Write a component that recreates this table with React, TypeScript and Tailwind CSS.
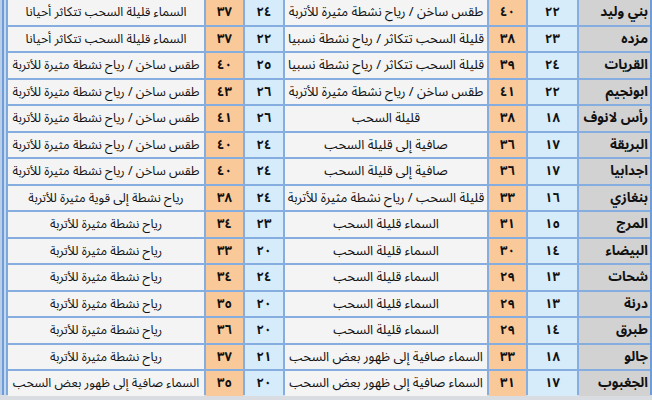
const rows: string[][] = [
  ["بني وليد", "٢٢", "٤٠", "طقس ساخن / رياح نشطة مثيرة للأتربة", "٢٤", "٣٧", "السماء قليلة السحب تتكاثر أحيانا"],
  ["مزده", "٢٣", "٣٨", "قليلة السحب تتكاثر / رياح نشطة نسبيا", "٢٢", "٣٧", "السماء قليلة السحب تتكاثر أحيانا"],
  ["القريات", "٢٤", "٣٩", "قليلة السحب تتكاثر / رياح نشطة نسبيا", "٢٥", "٤٠", "طقس ساخن / رياح نشطة مثيرة للأتربة"],
  ["ابونجيم", "٢٢", "٤١", "طقس ساخن / رياح نشطة مثيرة للأتربة", "٢٦", "٤٣", "طقس ساخن / رياح نشطة مثيرة للأتربة"],
  ["رأس لانوف", "١٨", "٣٨", "قليلة السحب", "٢٦", "٤١", "طقس ساخن / رياح نشطة مثيرة للأتربة"],
  ["البريقة", "١٧", "٣٦", "صافية إلى قليلة السحب", "٢٤", "٤٠", "طقس ساخن / رياح نشطة مثيرة للأتربة"],
  ["اجدابيا", "١٧", "٣٦", "صافية إلى قليلة السحب", "٢٤", "٤٠", "طقس ساخن / رياح نشطة مثيرة للأتربة"],
  ["بنغازي", "١٦", "٣٣", "قليلة السحب / رياح نشطة مثيرة للأتربة", "٢٤", "٣٨", "رياح نشطة إلى قوية مثيرة للأتربة"],
  ["المرج", "١٥", "٣١", "السماء قليلة السحب", "٢٣", "٣٤", "رياح نشطة مثيرة للأتربة"],
  ["البيضاء", "١٤", "٣٠", "السماء قليلة السحب", "٢٠", "٣٣", "رياح نشطة مثيرة للأتربة"],
  ["شحات", "١٣", "٢٩", "السماء قليلة السحب", "٢٤", "٣٤", "رياح نشطة مثيرة للأتربة"],
  ["درنة", "١٣", "٢٩", "السماء قليلة السحب", "٢٠", "٣٥", "رياح نشطة مثيرة للأتربة"],
  ["طبرق", "١٤", "٢٩", "السماء قليلة السحب", "٢٠", "٣٦", "رياح نشطة مثيرة للأتربة"],
  ["جالو", "١٨", "٣٣", "السماء صافية إلى ظهور بعض السحب", "٢١", "٣٧", "رياح نشطة مثيرة للأتربة"],
  ["الجغبوب", "١٧", "٣١", "السماء صافية إلى ظهور بعض السحب", "٢٠", "٣٥", "السماء صافية إلى ظهور بعض السحب"],
];

const cellClass = [
  "bg-[#d2d2d2] justify-start pr-[2px] text-[13.5px] font-bold",
  "bg-[#d6ecfb] justify-center text-[13px] font-bold",
  "bg-[#fac999] justify-center text-[13px] font-bold",
  "bg-[#f4f4f4] justify-center text-[13px]",
  "bg-[#d6ecfb] justify-center text-[13px] font-bold",
  "bg-[#fac999] justify-center text-[13px] font-bold",
  "bg-[#f4f4f4] justify-center text-[12.5px]",
];

export default function App() {
  return (
    <div className="w-[652px] h-[400px] overflow-hidden bg-[#d9dde2]">
      <div className="flex h-[397px] -mt-[2px]">
        <div className="flex w-[8px] shrink-0">
          <div className="w-[2px] bg-[#b9cfe9]" />
          <div className="w-[2px] bg-[#6f9bd6]" />
          <div className="w-[2px] bg-[#c4d8ef]" />
          <div className="w-[2px] bg-[#7ea7dc]" />
        </div>
        <div
          dir="rtl"
          className="flex-1 min-w-0 grid grid-cols-[71px_49px_37px_202px_38px_37px_minmax(0,1fr)] auto-rows-[24.5px] gap-[2px] bg-[#86ade0] border-r-[2px] border-r-[#6f9bd6] pt-[2px] pb-[2px] text-[#111] font-['Noto_Sans_Arabic','Noto_Naskh_Arabic','DejaVu_Sans',sans-serif] [font-stretch:condensed]"
        >
          {rows.map((r, i) =>
            r.map((v, j) => (
              <div
                key={i + "-" + j}
                className={"flex items-center min-w-0 whitespace-nowrap leading-[20px] " + cellClass[j]}
              >
                {v}
              </div>
            ))
          )}
        </div>
      </div>
    </div>
  );
}
